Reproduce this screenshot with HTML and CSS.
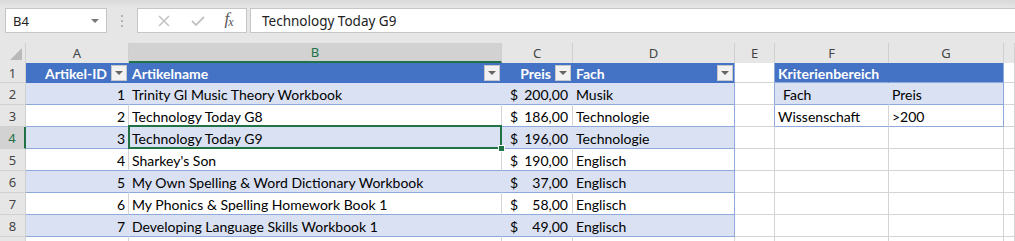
FILE: index.html
```html
<!DOCTYPE html>
<html lang="de">
<head>
    <meta charset="UTF-8">
    <title>Artikel - Kriterienbereich</title>
    <link rel="stylesheet" href="styles.css">
</head>
<body>
    <!-- Namensfeld und Bearbeitungsleiste -->
    <div class="toolbar">
        <div class="namebox">
            <span>B4</span>
            <span class="caret"></span>
        </div>
        <div class="grip"><i></i><i></i><i></i></div>
        <div class="fxbuttons">
            <svg width="14" height="14" viewBox="0 0 14 14"><path d="M2 2 L12 12 M12 2 L2 12" stroke="#c3c3c3" stroke-width="1.6" fill="none"/></svg>
            <svg width="16" height="14" viewBox="0 0 16 14"><path d="M2 7 L6 11 L14 3" stroke="#c3c3c3" stroke-width="1.8" fill="none"/></svg>
            <span class="fx">f<sub>x</sub></span>
        </div>
        <div class="formula">Technology Today G9</div>
    </div>

    <!-- Tabellenblatt -->
    <div class="sheet">
        <div class="corner"></div>
        <div class="colhead">A</div>
        <div class="colhead active">B</div>
        <div class="colhead">C</div>
        <div class="colhead">D</div>
        <div class="colhead">E</div>
        <div class="colhead">F</div>
        <div class="colhead">G</div>
        <div class="colhead"></div>

        <!-- Zeile 1 -->
        <div class="rowhead">1</div>
        <div class="c th right">Artikel-ID <span class="filter"></span></div>
        <div class="c th split">Artikelname <span class="filter"></span></div>
        <div class="c th right">Preis <span class="filter"></span></div>
        <div class="c th split edge">Fach <span class="filter"></span></div>
        <div class="c boxleft"></div>
        <div class="c kh">Kriterienbereich</div>
        <div class="c kh kend"></div>
        <div class="c"></div>

        <!-- Zeile 2 -->
        <div class="rowhead">2</div>
        <div class="c band right">1</div>
        <div class="c band">Trinity Gl Music Theory Workbook</div>
        <div class="c band money"><span>$</span><span>200,00</span></div>
        <div class="c band edge">Musik</div>
        <div class="c boxleft"></div>
        <div class="c kb indent">Fach</div>
        <div class="c kb kend">Preis</div>
        <div class="c"></div>

        <!-- Zeile 3 -->
        <div class="rowhead">3</div>
        <div class="c plain right">2</div>
        <div class="c plain">Technology Today G8</div>
        <div class="c plain money"><span>$</span><span>186,00</span></div>
        <div class="c plain edge">Technologie</div>
        <div class="c boxleft"></div>
        <div class="c kw">Wissenschaft</div>
        <div class="c kw kend">&gt;200</div>
        <div class="c"></div>

        <!-- Zeile 4 -->
        <div class="rowhead active">4</div>
        <div class="c band right">3</div>
        <div class="c band selected">Technology Today G9<span class="handle"></span></div>
        <div class="c band money"><span>$</span><span>196,00</span></div>
        <div class="c band edge">Technologie</div>
        <div class="c"></div>
        <div class="c"></div>
        <div class="c"></div>
        <div class="c"></div>

        <!-- Zeile 5 -->
        <div class="rowhead">5</div>
        <div class="c plain right">4</div>
        <div class="c plain">Sharkey's Son</div>
        <div class="c plain money"><span>$</span><span>190,00</span></div>
        <div class="c plain edge">Englisch</div>
        <div class="c"></div>
        <div class="c"></div>
        <div class="c"></div>
        <div class="c"></div>

        <!-- Zeile 6 -->
        <div class="rowhead">6</div>
        <div class="c band right">5</div>
        <div class="c band">My Own Spelling &amp; Word Dictionary Workbook</div>
        <div class="c band money"><span>$</span><span>37,00</span></div>
        <div class="c band edge">Englisch</div>
        <div class="c"></div>
        <div class="c"></div>
        <div class="c"></div>
        <div class="c"></div>

        <!-- Zeile 7 -->
        <div class="rowhead">7</div>
        <div class="c plain right">6</div>
        <div class="c plain">My Phonics &amp; Spelling Homework Book 1</div>
        <div class="c plain money"><span>$</span><span>58,00</span></div>
        <div class="c plain edge">Englisch</div>
        <div class="c"></div>
        <div class="c"></div>
        <div class="c"></div>
        <div class="c"></div>

        <!-- Zeile 8 -->
        <div class="rowhead">8</div>
        <div class="c band right">7</div>
        <div class="c band">Developing Language Skills Workbook 1</div>
        <div class="c band money"><span>$</span><span>49,00</span></div>
        <div class="c band edge">Englisch</div>
        <div class="c"></div>
        <div class="c"></div>
        <div class="c"></div>
        <div class="c"></div>

        <!-- Zeile 9 (angeschnitten) -->
        <div class="rowhead"></div>
        <div class="c"></div>
        <div class="c"></div>
        <div class="c"></div>
        <div class="c"></div>
        <div class="c"></div>
        <div class="c"></div>
        <div class="c"></div>
        <div class="c"></div>
    </div>
</body>
</html>
```

FILE: styles.css
```css
* {
    margin: 0;
    padding: 0;
    box-sizing: border-box;
}

body {
    width: 1015px;
    height: 241px;
    overflow: hidden;
    background: #fff;
    font-family: 'Lato', 'Liberation Sans', sans-serif;
}

/* Bearbeitungsleiste */
.toolbar {
    height: 43px;
    background: linear-gradient(#d9d9d9, #e6e6e6 8px);
    display: flex;
    align-items: flex-start;
    padding-top: 8px;
    padding-left: 5px;
    font-family: 'Noto Sans', 'Open Sans', sans-serif;
}

.namebox {
    width: 102px;
    height: 25px;
    background: #fff;
    border: 1px solid #c6c6c6;
    display: flex;
    align-items: center;
    justify-content: space-between;
    padding: 0 7px 0 7px;
    font-size: 13px;
    color: #222;
}

.caret {
    width: 0;
    height: 0;
    border-left: 4px solid transparent;
    border-right: 4px solid transparent;
    border-top: 4px solid #777;
}

.grip {
    width: 30px;
    height: 25px;
    display: flex;
    flex-direction: column;
    align-items: center;
    justify-content: center;
    gap: 3px;
}

.grip i {
    width: 2px;
    height: 2px;
    background: #b3b3b3;
}

.fxbuttons {
    width: 110px;
    height: 25px;
    background: #fff;
    border: 1px solid #c6c6c6;
    display: flex;
    align-items: center;
    justify-content: space-around;
    padding: 0 4px 0 10px;
}

.fx {
    font-family: 'Liberation Serif', serif;
    font-style: italic;
    font-size: 17px;
    color: #555;
    letter-spacing: -1px;
    margin-top: -3px;
}

.fx sub {
    font-size: 12px;
    vertical-align: -2px;
}

.formula {
    flex: 1;
    height: 25px;
    margin-left: 3px;
    background: #fff;
    border: 1px solid #c6c6c6;
    border-right: none;
    padding-left: 11px;
    display: flex;
    align-items: center;
    font-size: 13.5px;
    color: #222;
}

/* Tabellenblatt */
.sheet {
    display: grid;
    grid-template-columns: 26px 103px 373px 71px 162px 40px 114px 115px 11px;
    grid-template-rows: 20px 20px repeat(7, 22px) 10px;
    font-size: 14px;
    color: #000;
}

.corner {
    background: #e6e6e6;
    border-right: 1px solid #d0d0d0;
    position: relative;
}

.corner::after {
    content: "";
    position: absolute;
    right: 3px;
    bottom: 3px;
    border-left: 12px solid transparent;
    border-bottom: 12px solid #b9b9b9;
}

.colhead {
    background: #e6e6e6;
    border-right: 1px solid #d0d0d0;
    color: #444;
    font-family: 'Noto Sans', 'Open Sans', sans-serif;
    font-size: 13px;
    display: flex;
    align-items: center;
    justify-content: center;
}

.colhead.active {
    background: #d2d2d2;
    color: #217346;
    border-bottom: 2px solid #217346;
}

.rowhead {
    background: #e6e6e6;
    border-right: 1px solid #d0d0d0;
    border-bottom: 1px solid #d0d0d0;
    color: #444;
    font-family: 'Noto Sans', 'Open Sans', sans-serif;
    font-size: 13px;
    display: flex;
    align-items: center;
    justify-content: center;
}

.rowhead.active {
    background: #d2d2d2;
    color: #217346;
    border-right: 2px solid #217346;
}

.c {
    border-right: 1px solid #d4d4d4;
    border-bottom: 1px solid #d4d4d4;
    padding: 2px 3px 0 3px;
    display: flex;
    align-items: center;
    white-space: nowrap;
    position: relative;
}

/* Tabelle A:D */
.th {
    background: #4472c4;
    border-right-color: #4472c4;
    border-bottom-color: #4472c4;
    color: #fff;
    font-weight: bold;
    padding-right: 1px;
}

.th.right {
    justify-content: flex-end;
    gap: 4px;
}

.th.split {
    justify-content: space-between;
}

.band {
    background: #d9e1f2;
    border-right-color: #d9e1f2;
    border-bottom-color: #8ea9db;
}

.plain {
    border-bottom-color: #8ea9db;
}

.edge {
    border-right-color: #8ea9db;
}

.right {
    justify-content: flex-end;
}

.money {
    justify-content: space-between;
    padding-left: 8px;
    padding-right: 4px;
}

.filter {
    width: 16px;
    height: 16px;
    background: #f2f2f2;
    border: 1px solid #c8c8c8;
    position: relative;
    margin-top: -2px;
}

.filter::after {
    content: "";
    position: absolute;
    left: 3px;
    top: 5px;
    border-left: 4px solid transparent;
    border-right: 4px solid transparent;
    border-top: 4px solid #666;
}

/* Kriterienbereich F1:G3 */
.boxleft {
    border-right-color: #8ea9db;
}

.kh {
    background: #4472c4;
    border-right-color: #4472c4;
    border-bottom-color: #8ea9db;
    color: #fff;
    font-weight: bold;
}

.kb {
    background: #d9e1f2;
    border-right-color: #d9e1f2;
    border-bottom-color: #8ea9db;
}

.kw {
    border-bottom-color: #8ea9db;
}

.kend {
    border-right-color: #8ea9db;
}

.indent {
    padding-left: 8px;
}

/* aktive Zelle B4 */
.selected::after {
    content: "";
    position: absolute;
    left: -1px;
    top: -2px;
    right: -1px;
    bottom: -1px;
    border: 2px solid #217346;
}

.handle {
    position: absolute;
    right: -4px;
    bottom: -4px;
    width: 7px;
    height: 7px;
    background: #217346;
    border: 1px solid #fff;
    z-index: 2;
}
```
